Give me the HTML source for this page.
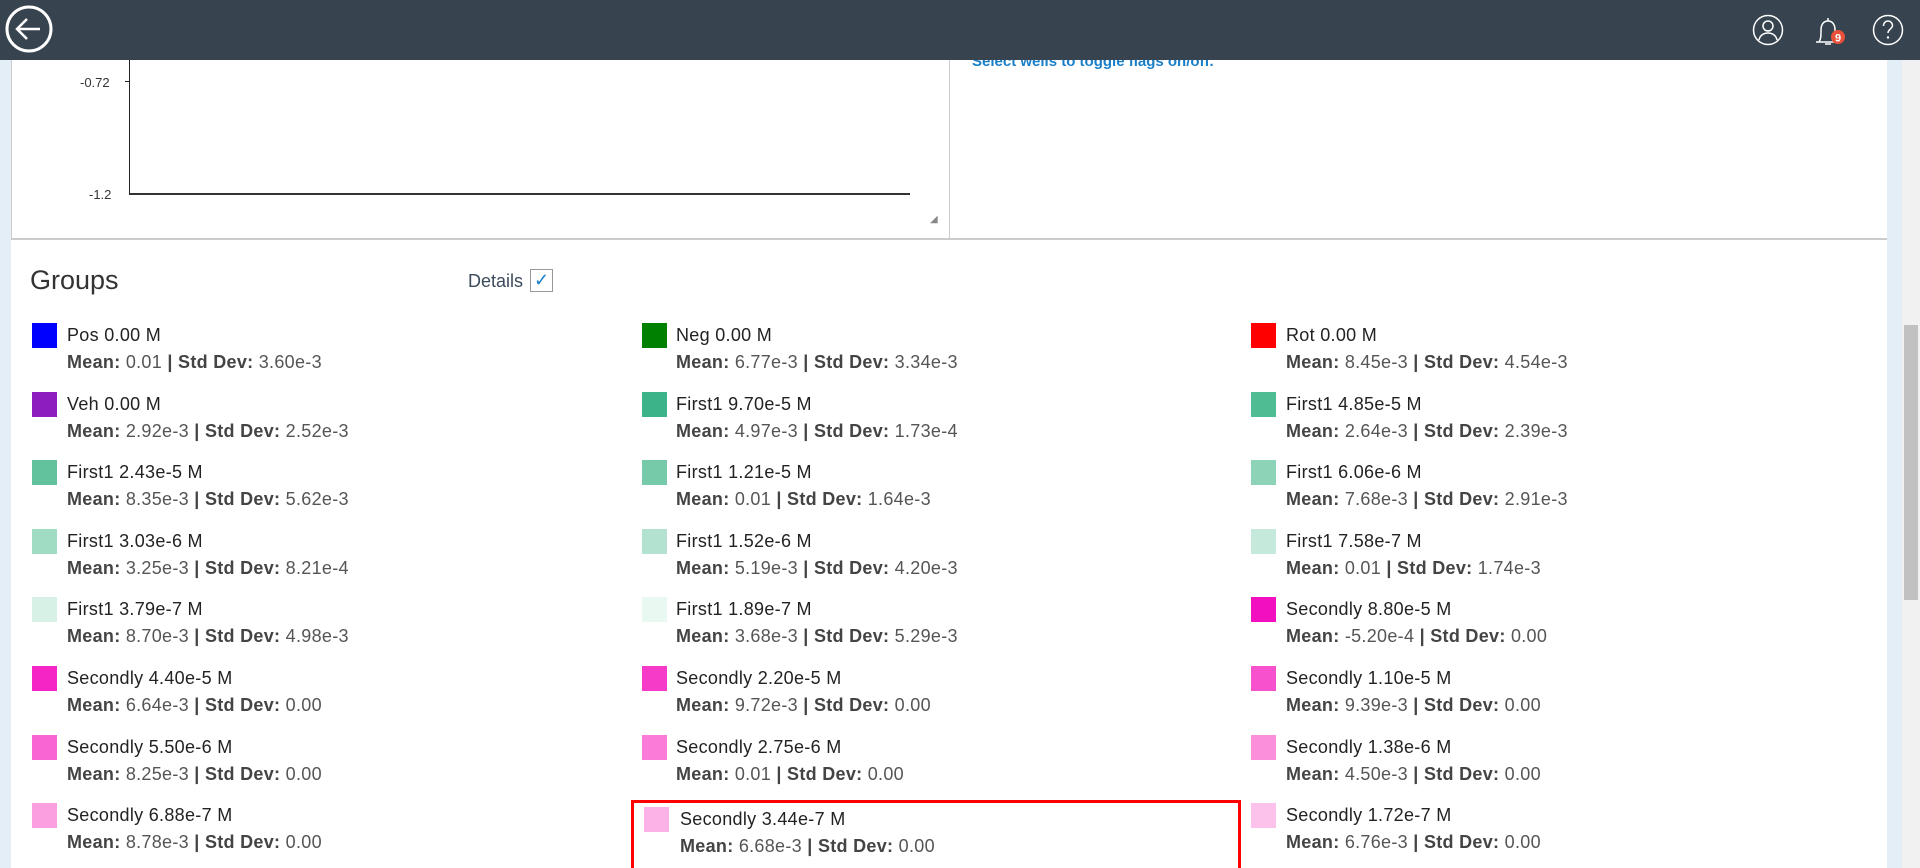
<!DOCTYPE html>
<html style="overflow:hidden;height:868px"><head><meta charset="utf-8"><style>
*{margin:0;padding:0;box-sizing:border-box}
body{width:1920px;height:868px;overflow:hidden;background:#fff;font-family:"Liberation Sans",sans-serif;position:relative;color:#333}
.a{position:absolute}
.sw{position:absolute;width:25px;height:25px}
.t1{position:absolute;font-size:18px;letter-spacing:0.3px;color:#222;white-space:nowrap}
.t2{position:absolute;font-size:18px;letter-spacing:0.3px;color:#555;white-space:nowrap}
.t2 b{color:#444}
</style></head><body>
<div class="a" style="left:0;top:0;width:11px;height:868px;background:#e3eef6"></div>
<div class="a" style="left:1887px;top:0;width:15px;height:868px;background:#e3eef6"></div>
<div class="a" style="left:1902px;top:60px;width:18px;height:808px;background:#f1f1f1"></div>
<div class="a" style="left:1904px;top:325px;width:14px;height:275px;background:#c1c1c1"></div>
<div class="a" style="left:11px;top:60px;width:1px;height:180px;background:#ccc"></div>
<div class="a" style="left:949px;top:60px;width:1px;height:179px;background:#ccc"></div>
<div class="a" style="left:11px;top:238px;width:1876px;height:2px;background:#ccc"></div>
<div class="a" style="left:129px;top:60px;width:1px;height:134px;background:#222"></div>
<div class="a" style="left:125px;top:81px;width:4px;height:1px;background:#222"></div>
<div class="a" style="left:129px;top:193px;width:781px;height:2px;background:#333"></div>
<div class="a" style="left:80px;top:75px;font-size:13px;color:#333">-0.72</div>
<div class="a" style="left:89px;top:187px;font-size:13px;color:#333">-1.2</div>
<div class="a" style="left:930px;top:214px;font-size:10px;color:#888">◢</div>
<div class="a" style="left:972px;top:53px;font-size:15px;font-weight:bold;color:#1a7fc9">Select wells to toggle flags on/off.</div>
<div class="a" style="left:0;top:0;width:1920px;height:60px;background:#37434f"></div>
<svg class="a" style="left:4px;top:4px" width="52" height="52" viewBox="0 0 52 52"><circle cx="25" cy="25" r="22" fill="none" stroke="#fff" stroke-width="3"/><path d="M36 25H14M23 15l-10 10 10 10" fill="none" stroke="#fff" stroke-width="2.5"/></svg>
<svg class="a" style="left:1752px;top:14px" width="32" height="32" viewBox="0 0 32 32"><circle cx="16" cy="16" r="14.5" fill="none" stroke="#fff" stroke-width="1.5"/><circle cx="16" cy="12" r="5" fill="none" stroke="#fff" stroke-width="1.5"/><path d="M7 26c1-5 5-7 9-7s8 2 9 7" fill="none" stroke="#fff" stroke-width="1.5"/></svg>
<svg class="a" style="left:1812px;top:14px" width="36" height="34" viewBox="0 0 36 34"><path d="M4 28h22M7 28c2-3 2-6 2-12s3-9 7-9 7 3 7 9 0 9 2 12M16 7V4M13 30h6" fill="none" stroke="#fff" stroke-width="1.5"/><circle cx="26" cy="23" r="7" fill="#e8503a"/><text x="26" y="27.5" font-size="11" font-weight="bold" fill="#fff" text-anchor="middle" font-family="Liberation Sans">9</text></svg>
<svg class="a" style="left:1872px;top:14px" width="32" height="32" viewBox="0 0 32 32"><circle cx="16" cy="16" r="14.5" fill="none" stroke="#fff" stroke-width="1.5"/><path d="M11.5 12c0-3 2-5 4.5-5s4.5 2 4.5 4.5c0 3-4.5 4-4.5 7.5" fill="none" stroke="#fff" stroke-width="1.5"/><circle cx="16" cy="23.5" r="1.2" fill="#fff"/></svg>
<div class="a" style="left:30px;top:265px;font-size:27px;color:#333">Groups</div>
<div class="a" style="left:468px;top:271px;font-size:18px;color:#3b4a5c">Details</div>
<div class="a" style="left:530px;top:269px;width:23px;height:23px;border:1px solid #999;color:#1a7fc9;font-size:18px;line-height:21px;text-align:center">✓</div>
<div class="a" style="left:631px;top:800px;width:610px;height:68px;border:3px solid #f00;border-bottom:none"></div>
<div id="g"></div>
<script>
var d=[
["#0000ff","Pos 0.00 M","0.01","3.60e-3"],["#008000","Neg 0.00 M","6.77e-3","3.34e-3"],["#ff0000","Rot 0.00 M","8.45e-3","4.54e-3"],
["#8e1dbf","Veh 0.00 M","2.92e-3","2.52e-3"],["#3cb388","First1 9.70e-5 M","4.97e-3","1.73e-4"],["#50bc94","First1 4.85e-5 M","2.64e-3","2.39e-3"],
["#63c29e","First1 2.43e-5 M","8.35e-3","5.62e-3"],["#77caa9","First1 1.21e-5 M","0.01","1.64e-3"],["#8cd3b7","First1 6.06e-6 M","7.68e-3","2.91e-3"],
["#a0dbc4","First1 3.03e-6 M","3.25e-3","8.21e-4"],["#b3e2d0","First1 1.52e-6 M","5.19e-3","4.20e-3"],["#c5eadc","First1 7.58e-7 M","0.01","1.74e-3"],
["#d7f1e7","First1 3.79e-7 M","8.70e-3","4.98e-3"],["#eaf8f2","First1 1.89e-7 M","3.68e-3","5.29e-3"],["#f20fc0","Secondly 8.80e-5 M","-5.20e-4","0.00"],
["#f425c4","Secondly 4.40e-5 M","6.64e-3","0.00"],["#f63bc8","Secondly 2.20e-5 M","9.72e-3","0.00"],["#f851cd","Secondly 1.10e-5 M","9.39e-3","0.00"],
["#f966d3","Secondly 5.50e-6 M","8.25e-3","0.00"],["#fa7cd8","Secondly 2.75e-6 M","0.01","0.00"],["#fb8fdc","Secondly 1.38e-6 M","4.50e-3","0.00"],
["#fb9fe0","Secondly 6.88e-7 M","8.78e-3","0.00"],["#fcb2e6","Secondly 3.44e-7 M","6.68e-3","0.00"],["#fdc2ec","Secondly 1.72e-7 M","6.76e-3","0.00"]];
var sx=[32,642,1251],tx=[67,676,1286],h="";
d.forEach(function(r,i){var c=i%3,row=Math.floor(i/3),y=323+row*68.6,s=sx[c],t=tx[c];
if(i==22){y=807;s=644;t=680;}
h+='<div class="sw" style="left:'+s+'px;top:'+y+'px;background:'+r[0]+'"></div>';
h+='<div class="t1" style="left:'+t+'px;top:'+(y+2)+'px">'+r[1]+'</div>';
h+='<div class="t2" style="left:'+t+'px;top:'+(y+29)+'px"><b>Mean:</b> '+r[2]+' <b>|</b> <b>Std Dev:</b> '+r[3]+'</div>';});
document.getElementById("g").innerHTML=h;
</script>
</body></html>
